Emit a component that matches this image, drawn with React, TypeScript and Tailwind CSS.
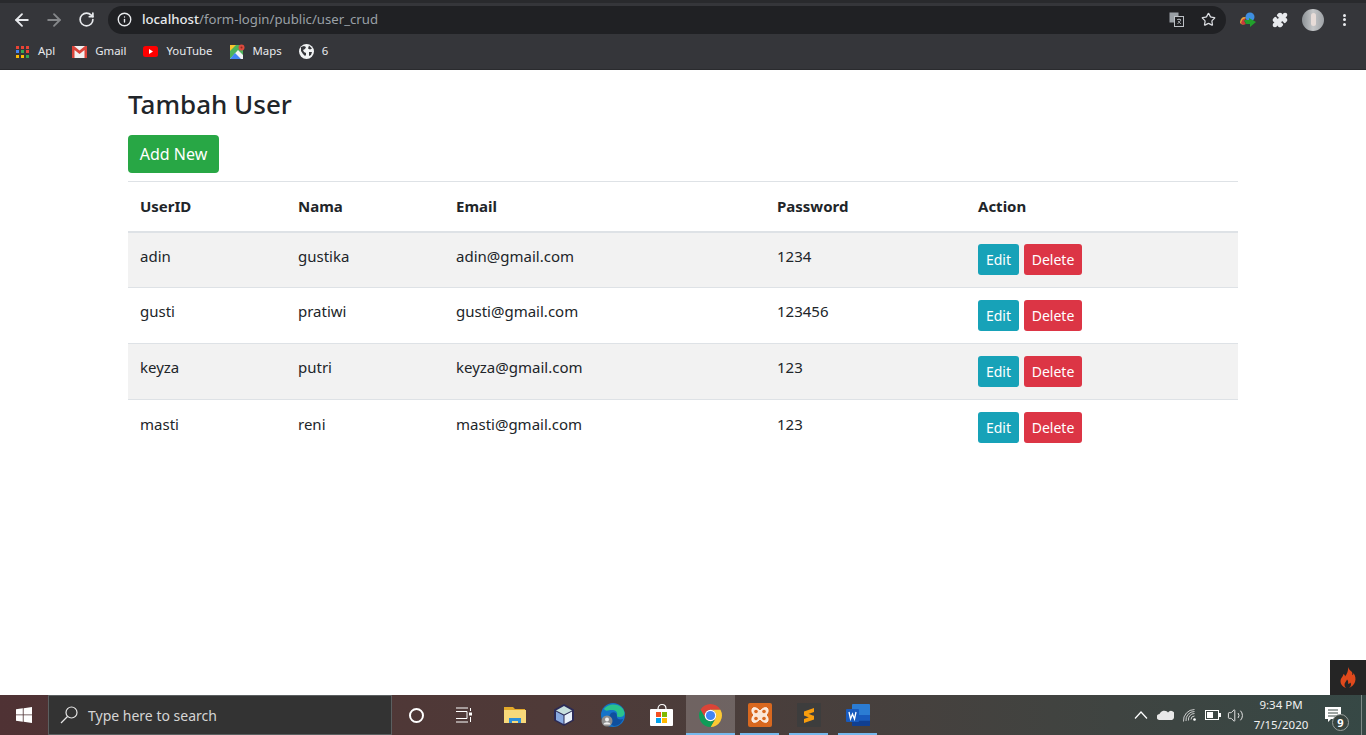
import React from "react";
import { ArrowLeft, ArrowRight, RotateCw, Info, Star, Puzzle, Volume2 } from "lucide-react";

const font = "font-['Noto_Sans','Open_Sans',sans-serif]";
const rows = [
  ["adin", "gustika", "adin@gmail.com", "1234"],
  ["gusti", "pratiwi", "gusti@gmail.com", "123456"],
  ["keyza", "putri", "keyza@gmail.com", "123"],
  ["masti", "reni", "masti@gmail.com", "123"],
];

function Mark({ name, icon }: { name: string; icon: React.ReactNode }) {
  return (
    <div className="flex items-center gap-[8px] text-[11.4px] text-[#e8eaed]">
      <span className="w-[15px] h-[15px] flex items-center justify-center">{icon}</span>
      <span className="-mt-[2px]">{name}</span>
    </div>
  );
}

function AppsIcon() {
  const c = ["#ea4335", "#ea4335", "#ea4335", "#4285f4", "#34a853", "#ea4335", "#fbbc04", "#fbbc04", "#34a853"];
  return (
    <span className="grid grid-cols-3 gap-[1.5px] w-[13px]">
      {c.map((x, i) => (
        <span key={i} className="w-[3px] h-[3px]" style={{ background: x }} />
      ))}
    </span>
  );
}

function Chrome() {
  return (
    <svg width="23" height="23" viewBox="4 4 40 40">
      <path fill="#db4437" d="M6.680 14A20 20 0 0 1 41.320 14H24A10 10 0 0 0 15.340 29Z" />
      <path fill="#fcc934" d="M41.320 14A20 20 0 0 1 24 44L32.660 29A10 10 0 0 0 24 14Z" />
      <path fill="#0f9d58" d="M24 44A20 20 0 0 1 6.680 14L15.340 29A10 10 0 0 0 32.660 29Z" />
      <circle cx="24" cy="24" r="10" fill="#fff" />
      <circle cx="24" cy="24" r="8" fill="#4285f4" />
    </svg>
  );
}

function TaskItem({ children, active, mark }: { children: React.ReactNode; active?: boolean; mark?: boolean }) {
  return (
    <div className={`relative w-[49px] h-full flex items-center justify-center ${active ? "bg-white/20" : ""}`}>
      {children}
      {mark && <span className={`absolute bottom-0 h-[2px] bg-[#76b9ed] ${active ? "inset-x-0" : "inset-x-[5px]"}`} />}
    </div>
  );
}

export default function App() {
  return (
    <div className={`h-[735px] w-[1366px] overflow-hidden flex flex-col bg-white ${font}`}>
      <header className="h-[70px] bg-[#35363a] border-b border-[#2a2b2e] shrink-0 flex flex-col">
        <div className="h-[3px] bg-[#292a2d]" />
        <div className="h-[33px] flex items-center pl-[12px]">
          <ArrowLeft size={20} className="text-[#e8eaed]" strokeWidth={2.2} />
          <ArrowRight size={20} className="text-[#85878a] ml-[12px]" strokeWidth={2.2} />
          <RotateCw size={17} className="text-[#e8eaed] ml-[14px]" strokeWidth={2.4} />
          <div className="ml-[13px] w-[1118px] h-[28px] rounded-full bg-[#202124] flex items-center pl-[9px] pr-[10px]">
            <Info size={15} className="text-[#e8eaed]" strokeWidth={2.2} />
            <span className="ml-[10px] text-[13.2px] text-[#e8eaed] font-medium">localhost</span>
            <span className="text-[13.2px] text-[#9aa0a6]">/form-login/public/user_crud</span>
            <span className="ml-auto flex items-center gap-[17px]">
              <svg width="15" height="15" viewBox="0 0 15 15">
                <rect x="0.5" y="0.5" width="9" height="10" fill="#9aa0a6" />
                <rect x="5.5" y="4.5" width="9" height="10" fill="#202124" stroke="#bdc1c6" />
                <path d="M8 7.500h4M10 6.500v1M8.500 12 12 8M9 9l3 3" stroke="#bdc1c6" strokeWidth="0.8" fill="none" />
              </svg>
              <Star size={15} className="text-[#dadce0]" strokeWidth={2} />
            </span>
          </div>
          <svg width="18" height="16" viewBox="0 0 18 16" className="ml-[13px]">
            <path d="M1 10 C2 5 5 4 8 6 C5 6 4 9 6 12 C3 13 1 12 1 10Z" fill="#e8a23a" />
            <path d="M2 11 C3 7 5 6 7 7 C5 8 5 10 7 12 C5 13 3 13 2 11Z" fill="#c93b3b" />
            <circle cx="11" cy="5" r="4.500" fill="#3f8fe0" />
            <path d="M5 8h5V6l7 4-6 5v-3H7z" fill="#21a02b" />
          </svg>
          <Puzzle size={16} fill="#e8eaed" className="text-[#e8eaed] ml-[15px]" />
          <span className="ml-[14px] w-[22px] h-[22px] rounded-full bg-gradient-to-r from-[#8d9296] via-[#c4c6c8] to-[#9ea2a6] flex items-center justify-center">
            <span className="w-[5px] h-[13px] rounded-full bg-[#e7dcd8]" />
          </span>
          <span className="ml-[19px] flex flex-col gap-[1.500px]">
            <span className="w-[3px] h-[3px] rounded-full bg-[#e8eaed]" />
            <span className="w-[3px] h-[3px] rounded-full bg-[#e8eaed]" />
            <span className="w-[3px] h-[3px] rounded-full bg-[#e8eaed]" />
          </span>
        </div>
        <div className="flex-1 flex items-center pl-[15px] gap-[17px] -mt-[1px]">
          <Mark name="Apl" icon={<AppsIcon />} />
          <Mark
            name="Gmail"
            icon={
              <svg width="15" height="12" viewBox="0 0 15 12">
                <rect width="15" height="12" fill="#f1f1f1" />
                <path d="M0 0h2l5.500 4.500L13 0h2v12h-2.500V4L7.500 8 2.500 4v8H0z" fill="#d9443a" />
              </svg>
            }
          />
          <Mark
            name="YouTube"
            icon={
              <svg width="15" height="11" viewBox="0 0 15 11">
                <rect width="15" height="11" rx="2.500" fill="#f00" />
                <path d="M6 3l4 2.500L6 8z" fill="#fff" />
              </svg>
            }
          />
          <Mark
            name="Maps"
            icon={
              <svg width="15" height="15" viewBox="0 0 15 15">
                <rect y="1" width="13" height="14" fill="#4db25a" />
                <path d="M0 15 L8 6 L13 11 V15Z" fill="#f2f2f2" />
                <path d="M0 15 L5 9 L11 15Z" fill="#4285f4" />
                <path d="M0 1h6L0 7z" fill="#f7c52e" />
                <circle cx="11.500" cy="3.500" r="3" fill="#dd4b3e" />
                <circle cx="11.500" cy="3.500" r="1" fill="#8d2b22" />
              </svg>
            }
          />
          <Mark
            name="6"
            icon={
              <svg width="15" height="15" viewBox="0 0 15 15">
                <circle cx="7.500" cy="7.500" r="7.500" fill="#f1f3f4" />
                <path d="M2 3l3-1 2 1-1 2-2 1 1 2 2 1v2l-1 1-2-2-2-3zM10 1.500l3 3-2 1-2-1zM10 8h3l-1 3-2 1z" fill="#35363a" />
              </svg>
            }
          />
        </div>
      </header>

      <main className="flex-1 min-h-0 relative text-[#212529]">
        <div className="w-[1110px] ml-[128px]">
          <h1 className="text-[26px] leading-[34px] font-medium mt-[17px] mb-[14px]">Tambah User</h1>
          <button className="block h-[38px] w-[91px] rounded-[4px] bg-[#28a745] text-white text-[16px]">Add New</button>
          <table className="w-full mt-[8px] border-collapse text-[15px] table-fixed">
            <thead>
              <tr className="h-[50px] border-t border-b-2 border-t-[#dee2e6] border-b-[#dee2e6] text-left">
                <th className="w-[158px] pl-3 font-bold">UserID</th>
                <th className="w-[158px] pl-3 font-bold">Nama</th>
                <th className="w-[321px] pl-3 font-bold">Email</th>
                <th className="w-[201px] pl-3 font-bold">Password</th>
                <th className="pl-3 font-bold">Action</th>
              </tr>
            </thead>
            <tbody>
              {rows.map((r, i) => (
                <tr key={r[0]} className={`h-[56px] ${i < 3 ? "border-b border-[#dee2e6]" : ""} ${i % 2 === 0 ? "bg-[#f2f2f2]" : ""}`}>
                  {r.map((c) => (
                    <td key={c} className="pl-3 pb-[8px]">{c}</td>
                  ))}
                  <td className="pl-3">
                    <div className="flex gap-[5px]">
                      <button className="h-[31px] w-[41px] rounded-[3px] bg-[#17a2b8] text-white text-[14px]">Edit</button>
                      <button className="h-[31px] w-[58px] rounded-[3px] bg-[#dc3545] text-white text-[14px]">Delete</button>
                    </div>
                  </td>
                </tr>
              ))}
            </tbody>
          </table>
        </div>
        <div className="absolute right-0 bottom-0 w-[36px] h-[35px] bg-[#252525] flex items-center justify-center">
          <svg width="16" height="21" viewBox="0 0 16 21">
            <path
              d="M8 0c1 3 3 4 4 5 .5 1 .5 2 0 3 1 0 1.500-1 1.500-2 2 3 2.500 6 1.500 9-1 3-3.500 5-6 6 2-1.500 2.500-3.500 1.500-5.500-.5 1-1.500 1.500-2.500 1 .5-1.500 0-3-1-4-.5 2-2.500 3-2.500 5.500 0 1 .5 2 1.500 3C3 20 .5 17.500.5 14 .5 11 3 10 3.500 7c1 .5 1.500 1.500 1.500 2.500C7 7 8.500 4 8 0Z"
              fill="#e0491c"
            />
          </svg>
        </div>
      </main>

      <footer className="h-[40px] shrink-0 flex items-center bg-gradient-to-r from-[#4f3234] via-[#4f3a38] via-40% to-[#364845] text-white">
        <div className="w-[48px] h-full flex items-center justify-center">
          <svg width="16" height="16" viewBox="0 0 16 16" fill="#fff">
            <path d="M0 2.300 6.800 1.300V7.500H0ZM7.600 1.200 16 0V7.500H7.600ZM0 8.300H6.800V14.700L0 13.700ZM7.600 8.300H16V16L7.600 14.800Z" />
          </svg>
        </div>
        <div className="w-[344px] h-full bg-[#333333] border border-[#5b5f60] flex items-center pl-[11px]">
          <svg width="18" height="18" viewBox="0 0 18 18" fill="none" stroke="#e6e6e6" strokeWidth="1.200">
            <circle cx="11.500" cy="6.500" r="5.500" />
            <path d="M7.500 10.500 1 17" />
          </svg>
          <span className="ml-[10px] text-[14px] text-[#d5d5d5]">Type here to search</span>
        </div>
        <div className="w-[48px] h-full flex items-center justify-center">
          <span className="w-[15px] h-[15px] rounded-full border-2 border-white" />
        </div>
        <div className="w-[48px] h-full flex items-center justify-center">
          <svg width="18" height="16" viewBox="0 0 18 16" fill="none" stroke="#fff">
            <path d="M1 1h12M1 15h12M1 4.500h11v7H1" />
            <rect x="14.500" y="6" width="2" height="2" fill="#fff" />
            <path d="M15.500 1v3M15.500 10v5" />
          </svg>
        </div>
        <div className="w-[2px]" />
        <TaskItem>
          <svg width="22" height="18" viewBox="0 0 22 18">
            <path d="M0 1h9l2 2h10v14H0z" fill="#e3a92a" />
            <path d="M0 4h22v13H0z" fill="#f7d97a" />
            <path d="M5 17v-5h12v5h-3v-2H8v2z" fill="#2e8fd8" />
          </svg>
        </TaskItem>
        <TaskItem>
          <svg width="24" height="24" viewBox="0 0 24 24">
            <path d="M12 1 22 6.500V17.500L12 23 2 17.500V6.500Z" fill="#2b2a55" />
            <path d="M12 3 20 7.500 12 11.500 4 7.500Z" fill="#c8e0de" />
            <path d="M4 8.500 11.500 12.500V21L4 17Z" fill="#88a9e0" />
            <path d="M20 8.500 12.500 12.500V21L20 17Z" fill="#e9f1fa" />
          </svg>
        </TaskItem>
        <TaskItem>
          <svg width="24" height="24" viewBox="0 0 24 24">
            <circle cx="12" cy="12" r="12" fill="#1473c9" />
            <path d="M3 6C6 1 17-1 22 6c3 5 1 8-3 8-3 0-3-1-3-2 1-3-2-5-5-5-4 0-6 2-8-1Z" fill="#2ac38d" />
            <path d="M10 10c4-2 6 1 6 3-1 3 3 4 6 3-1 3-4 7-9 7-5-1-7-8-3-13Z" fill="#0f4f9e" />
            <circle cx="6" cy="18" r="5.500" fill="#8d8d8d" />
            <circle cx="6" cy="16.500" r="2" fill="#eee" />
            <path d="M2.500 21.500c0-3 7-3 7 0z" fill="#eee" />
          </svg>
        </TaskItem>
        <TaskItem>
          <svg width="24" height="24" viewBox="0 0 24 24">
            <path d="M8 6c0-6 8-6 8 0" fill="none" stroke="#fff" strokeWidth="1.200" />
            <rect y="6" width="23" height="17" rx="1" fill="#fff" />
            <rect x="6" y="9" width="5" height="5" fill="#f25022" />
            <rect x="12" y="9" width="5" height="5" fill="#7fba00" />
            <rect x="6" y="15" width="5" height="5" fill="#00a4ef" />
            <rect x="12" y="15" width="5" height="5" fill="#ffb900" />
          </svg>
        </TaskItem>
        <TaskItem active mark>
          <Chrome />
        </TaskItem>
        <TaskItem mark>
          <svg width="24" height="24" viewBox="0 0 24 24">
            <rect width="24" height="24" rx="2" fill="#d9681f" />
            <path d="M5 5c3-1 5 1 7 3 2-2 4-4 7-3 2 2 1 5-1 7 2 2 3 5 1 7-3 1-5-1-7-3-2 2-4 4-7 3-2-2-1-5 1-7-2-2-3-5-1-7Z" fill="#fbe5d4" stroke="#fff" strokeWidth="1" />
            <circle cx="8" cy="8.500" r="1.800" fill="#d9681f" />
            <circle cx="16" cy="8.500" r="1.800" fill="#d9681f" />
            <circle cx="8" cy="15.500" r="1.800" fill="#d9681f" />
            <circle cx="16" cy="15.500" r="1.800" fill="#d9681f" />
          </svg>
        </TaskItem>
        <TaskItem mark>
          <svg width="24" height="24" viewBox="0 0 24 24">
            <rect width="24" height="24" rx="1" fill="#3d3d3d" />
            <path d="M7 8.500 17 5V9L7 12.500ZM7 9 17 13V16.500L7 12.500ZM7 16 17 12.500V16.500L7 20Z" fill="#f99d0d" />
          </svg>
        </TaskItem>
        <TaskItem mark>
          <svg width="24" height="22" viewBox="0 0 24 22">
            <rect x="6" width="18" height="22" rx="1" fill="#2b7cd3" />
            <rect x="6" y="11" width="18" height="5.500" fill="#185abd" />
            <rect x="6" y="16.500" width="18" height="5.500" fill="#103f91" />
            <rect y="5" width="13" height="13" rx="1" fill="#185abd" />
            <path d="M3 8l1.500 7L6.500 10l2 5L10 8" fill="none" stroke="#fff" strokeWidth="1.300" />
          </svg>
        </TaskItem>

        <div className="ml-auto flex items-center h-full">
          <svg width="14" height="8" viewBox="0 0 14 8" fill="none" stroke="#fff" strokeWidth="1.200">
            <path d="M1 7.500 7 1l6 6.500" />
          </svg>
          <svg width="17" height="10" viewBox="0 0 17 10" fill="#e8e8e8" className="ml-[9px]">
            <path d="M3 10a3 3 0 0 1-.5-6A5 5 0 0 1 11 2.500 3.500 3.500 0 0 1 17 7a3 3 0 0 1-2 3Z" />
          </svg>
          <svg width="14" height="13" viewBox="0 0 14 13" fill="none" stroke="#dcdcdc" strokeWidth="0.900" className="ml-[9px]">
            <circle cx="11.500" cy="10.500" r="1.300" fill="#fff" stroke="none" />
            <path d="M8 10.500A3.500 3.500 0 0 1 11.500 7M5.500 11.500A6 6 0 0 1 11.500 4.500M3 12A8.500 8.500 0 0 1 11.500 2.500M.5 12.500A11 11 0 0 1 11.500.5" />
          </svg>
          <svg width="16" height="10" viewBox="0 0 16 10" className="ml-[8px]">
            <rect x="0.500" y="0.500" width="13" height="9" fill="none" stroke="#fff" />
            <rect x="2" y="2" width="6" height="6" fill="#fff" />
            <rect x="14" y="3" width="2" height="4" fill="#fff" />
          </svg>
          <Volume2 size={17} className="text-[#e4e4e4] ml-[6px]" strokeWidth={1.4} />
          <div className="w-[72px] text-center text-[11.500px] leading-[20px] text-[#f0f0f0] ml-[1px]">
            <div>9:34 PM</div>
            <div>7/15/2020</div>
          </div>
          <div className="relative w-[44px] h-full">
            <svg width="16" height="15" viewBox="0 0 16 15" className="absolute left-[8px] top-[12px]">
              <path d="M0 0h16v12H6l-3 3v-3H0z" fill="#fff" />
              <path d="M3 3h10M3 6h10M3 9h10" stroke="#3a4a46" />
            </svg>
            <span className="absolute left-[15px] top-[19px] w-[17px] h-[17px] rounded-full bg-[#38443f] border border-[#9aa09d] text-[11px] font-bold leading-[15px] text-center">9</span>
          </div>
          <div className="w-[1px] h-full bg-[#7e8a87] mr-[4px]" />
        </div>
      </footer>
    </div>
  );
}
